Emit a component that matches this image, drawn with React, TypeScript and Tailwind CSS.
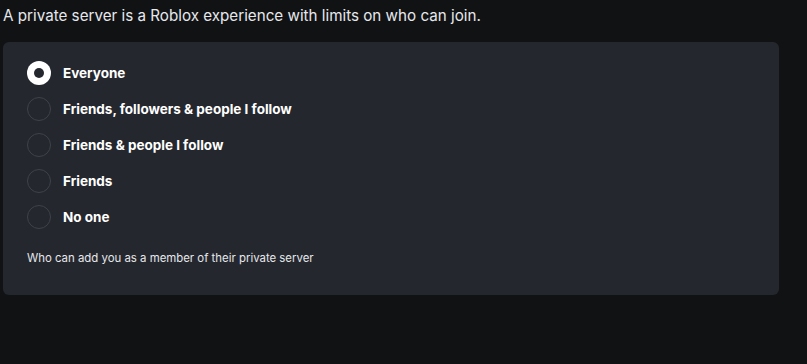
import { useState } from 'react'

const options = [
  'Everyone',
  'Friends, followers & people I follow',
  'Friends & people I follow',
  'Friends',
  'No one',
]

export default function App() {
  const [selected, setSelected] = useState(0)

  return (
    <div className="min-h-[364px] w-full bg-[#111214] pl-[3px] pt-[4px] font-['Inter','Liberation_Sans',sans-serif]">
      <p className="text-[15.2px] leading-[24px] text-[#e6e8ec]">
        A private server is a Roblox experience with limits on who can join.
      </p>

      <div className="mt-[14px] w-[776px] rounded-[6px] bg-[#25272e] pl-[24px] pt-[19px] pb-[29px]">
        <ul className="flex flex-col gap-3">
          {options.map((label, i) => (
            <li
              key={label}
              className="flex h-[24px] cursor-pointer items-center gap-[12px]"
              onClick={() => setSelected(i)}
            >
              {selected === i ? (
                <span className="flex h-[24px] w-[24px] items-center justify-center rounded-full bg-white">
                  <span className="h-[10px] w-[10px] rounded-full bg-[#25272e]" />
                </span>
              ) : (
                <span className="h-[24px] w-[24px] rounded-full border border-[#3f424a]" />
              )}
              <span className="text-[13.5px] font-bold text-white">{label}</span>
            </li>
          ))}
        </ul>

        <p className="mt-[21px] text-[11.4px] leading-[16px] text-[#e6e8ec]">
          Who can add you as a member of their private server
        </p>
      </div>
    </div>
  )
}
